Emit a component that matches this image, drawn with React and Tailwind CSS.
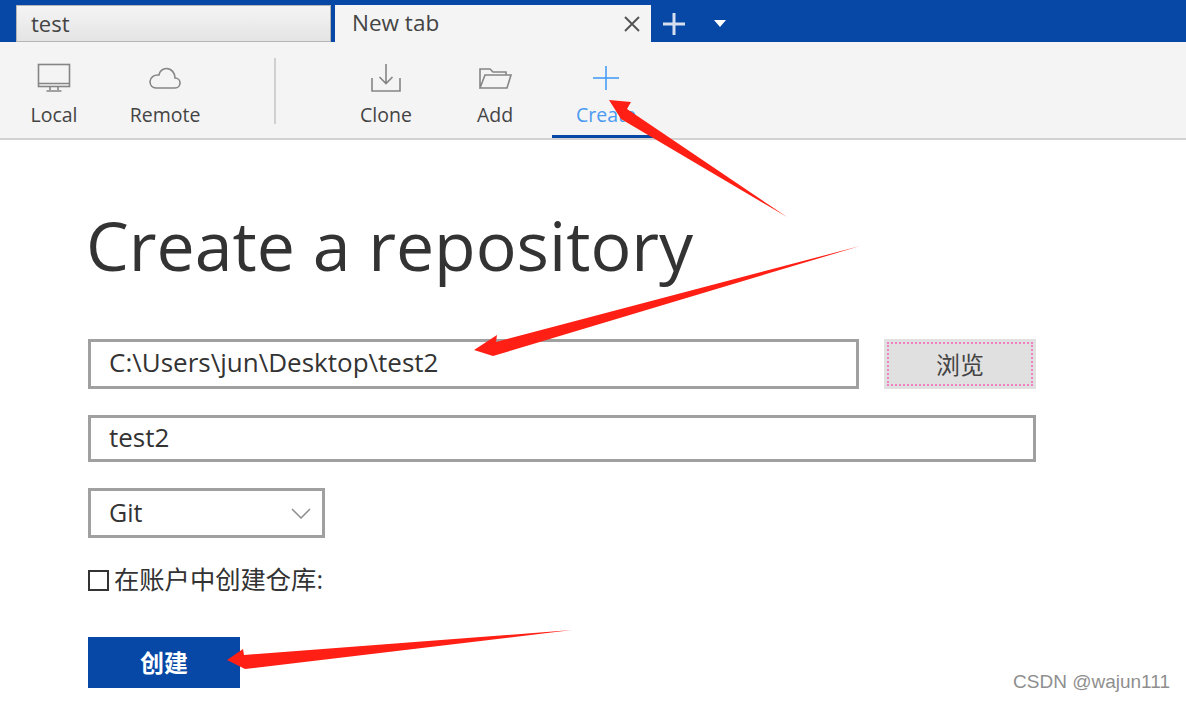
import React from 'react';

const FONT = "font-['Open_Sans','Noto_Sans_CJK_SC',sans-serif]";

const ToolItem = ({ icon, label, active }) => (
  <div className={`w-[108px] h-[96px] flex flex-col items-center relative ${active ? 'text-[#4a9bf0]' : 'text-[#444]'}`}>
    <div className="h-[52px] w-full flex items-center justify-center mt-[10px]">{icon}</div>
    <span className="text-[19.500px] leading-[26px] -mt-[2px]">{label}</span>
    {active && <div className="absolute left-0 right-0 bottom-0 h-[3px] bg-[#0747a6]" />}
  </div>
);

const MonitorIcon = () => (
  <svg width="34" height="30" viewBox="0 0 34 30" fill="none" stroke="#858585" strokeWidth="1.6">
    <rect x="1.500" y="1.500" width="31" height="22" />
    <path d="M1.500 20.500h31M13 24v3M21 24v3M9.500 28h15" />
  </svg>
);

const CloudIcon = () => (
  <svg width="32" height="22" viewBox="0 0 32 22" fill="none" stroke="#858585" strokeWidth="1.6">
    <path d="M7 21h19c3 0 5-2.200 5-5s-2-5-5-5c0-5-3.500-9.500-8.500-9.500C13.500 1.500 10.500 4.500 10 8 5 7.500 1 10.500 1 14.500S3.500 21 7 21z" />
  </svg>
);

const CloneIcon = () => (
  <svg width="30" height="28" viewBox="0 0 30 28" fill="none" stroke="#858585" strokeWidth="1.6">
    <path d="M1 14v13h28V14M15 0v19M8.500 13l6.500 6.500 6.500-6.500" />
  </svg>
);

const FolderIcon = () => (
  <svg width="33" height="22" viewBox="0 0 33 22" fill="none" stroke="#858585" strokeWidth="1.6">
    <path d="M1 21V2h10l3 3h13v3M1 21l5-13h26l-4 13H1z" />
  </svg>
);

const PlusIcon = () => (
  <svg width="26" height="24" viewBox="0 0 26 24" fill="none" stroke="#3d97f5" strokeWidth="1.500">
    <path d="M13 0v24M0 12h26" />
  </svg>
);

const Arrows = () => (
  <svg className="absolute left-0 top-0 pointer-events-none" width="1186" height="702" fill="#ff1f14">
    <polygon points="609,100 631,102 627,109 787,217 621,119" />
    <polygon points="474,350 497,335 496,342 860,246 493,356" />
    <polygon points="227,660 243,649 244,655 572,630 245,669" />
  </svg>
);

export default function App() {
  return (
    <div className={`relative w-[1186px] h-[702px] bg-white overflow-hidden text-[#333] ${FONT}`}>
      {/* tab strip */}
      <div className="h-[42px] bg-[#0747a6] flex items-end pl-[16px]">
        <div className="w-[315px] h-[37px] bg-gradient-to-b from-[#f4f4f4] to-[#e4e4e4] border border-[#b5b5b5] pl-[14px] text-[22px] leading-[34px] text-[#444]">
          test
        </div>
        <div className="w-[316px] h-[37px] ml-[4px] bg-[#f4f4f4] pl-[17px] pr-[10px] flex items-center justify-between text-[22.500px] text-[#444]">
          <span className="-mt-[2px]">New tab</span>
          <svg width="18" height="18" viewBox="0 0 18 18" fill="none" stroke="#555" strokeWidth="2">
            <path d="M2 2l14 14M16 2L2 16" />
          </svg>
        </div>
        <div className="h-[37px] flex items-center ml-[11px]">
          <svg width="24" height="24" viewBox="0 0 24 24" fill="none" stroke="#d5dff0" strokeWidth="3">
            <path d="M12 1v22M1 12h22" />
          </svg>
          <svg className="ml-[28px]" width="12" height="7" viewBox="0 0 12 7" fill="#fff">
            <path d="M0 0h12L6 7z" />
          </svg>
        </div>
      </div>

      {/* toolbar */}
      <div className="h-[98px] bg-[#f4f4f4] border-b-2 border-[#d2d2d2] flex items-start">
        <ToolItem icon={<MonitorIcon />} label="Local" />
        <div className="w-[3px]" />
        <ToolItem icon={<CloudIcon />} label="Remote" />
        <div className="w-[2px] h-[66px] mt-[16px] ml-[55px] mr-[56px] bg-[#d0d0d0]" />
        <ToolItem icon={<CloneIcon />} label="Clone" />
        <div className="w-[1px]" />
        <ToolItem icon={<FolderIcon />} label="Add" />
        <div className="w-[3px]" />
        <ToolItem icon={<PlusIcon />} label="Create" active />
      </div>

      {/* form */}
      <div className="pl-[88px] w-[948px] box-content">
        <h1 className="text-[68px] leading-[90px] mt-[60px] -ml-[2px] text-[#333]">Create a repository</h1>
        <div className="flex items-stretch justify-between mt-[49px] h-[50px]">
          <input
            readOnly
            value="C:\Users\jun\Desktop\test2"
            className="w-[771px] border-[3px] border-[#a0a0a0] pl-[18px] pb-[4px] text-[26px] text-[#333] outline-none"
          />
          <button className="w-[152px] bg-[#e0e0e0] p-[3px] text-[24px] text-[#444]">
            <div className="h-full border-2 border-dotted border-[#f27fc0] flex items-center justify-center pt-[1px]">浏览</div>
          </button>
        </div>
        <input
          readOnly
          value="test2"
          className="block w-[948px] h-[47px] mt-[26px] border-[3px] border-[#a0a0a0] pl-[18px] pb-[3px] text-[26px] text-[#333] outline-none"
        />
        <div className="w-[237px] h-[50px] mt-[26px] border-[3px] border-[#a0a0a0] pl-[18px] pr-[11px] flex items-center justify-between text-[25px]">
          <span>Git</span>
          <svg width="20" height="11" viewBox="0 0 20 11" fill="none" stroke="#8c8c8c" strokeWidth="1.500">
            <path d="M1 1l9 9 9-9" />
          </svg>
        </div>
        <div className="flex items-center mt-[28px] h-[28px] text-[25.300px]">
          <div className="w-[21px] h-[21px] border-2 border-[#333]" />
          <span className="ml-[5px]">在账户中创建仓库:</span>
        </div>
        <button className="block w-[152px] h-[51px] mt-[43px] bg-[#0747a6] text-white text-[24px] font-bold">创建</button>
      </div>

      <Arrows />
      <div className="absolute right-[16px] bottom-[8px] text-[19px] leading-[24px] text-[#8f8f8f] font-['Liberation_Sans',sans-serif]">CSDN @wajun111</div>
    </div>
  );
}
